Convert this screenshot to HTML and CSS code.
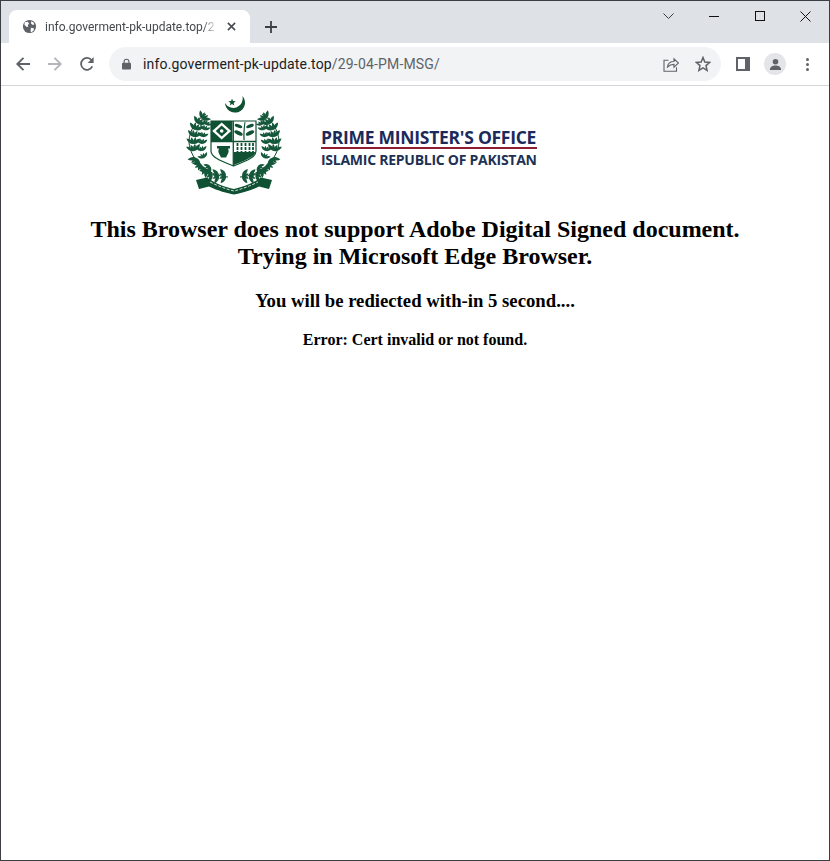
FILE: index.html
```html
<!DOCTYPE html>
<html lang="en">
<head>
<meta charset="utf-8">
<title>info.goverment-pk-update.top</title>
<link rel="stylesheet" href="styles.css">
</head>
<body>
<div class="window">
  <header class="tabstrip">
    <div class="tab">
      <svg class="favicon" viewBox="0 0 16 16"><circle cx="8" cy="8" r="7" fill="#5f6368"/><path d="M3 3.500 6 3l1.500 1.600L6.200 6.600 6.800 8 5 8.400 2.500 6zM9.500 9.200l3 .6.200 1.800-2.400 2.400-1.200-.6.200-2zM10 2.500l2.600 1.500.4 2-2 .2-1.500-1.800z" fill="#fff"/></svg>
      <span class="tab-title">info.goverment-pk-update.top/2</span>
      <svg class="tab-close" viewBox="0 0 10 10"><path d="M1 1l8 8M9 1l-8 8" stroke="#45484c" stroke-width="1.700" fill="none"/></svg>
    </div>
    <svg class="newtab" viewBox="0 0 12 12"><path d="M6 0v12M0 6h12" stroke="#3c4043" stroke-width="1.800" fill="none"/></svg>
    <div class="caption">
      <svg class="cap-chevron" viewBox="0 0 11 6"><path d="M.5.5 5.500 5.500 10.500.5" stroke="#3a3d40" fill="none"/></svg>
      <svg class="cap-min" viewBox="0 0 10 1"><path d="M0 .5h10" stroke="#111" fill="none"/></svg>
      <svg class="cap-max" viewBox="0 0 10 10"><rect x=".5" y=".5" width="9" height="9" stroke="#111" fill="none"/></svg>
      <svg class="cap-close" viewBox="0 0 11 11"><path d="M.5.5l10 10M10.500.5l-10 10" stroke="#111" fill="none"/></svg>
    </div>
  </header>
  <nav class="toolbar">
    <svg class="nav-ico" viewBox="0 0 16 16"><path d="M15 8H2.500M8.500 1.800 2.300 8l6.200 6.200" stroke="#5f6368" stroke-width="1.900" fill="none"/></svg>
    <svg class="nav-ico nav-fwd" viewBox="0 0 16 16"><path d="M1 8h12.500M7.500 1.800 13.700 8l-6.200 6.200" stroke="#b4b6b9" stroke-width="1.900" fill="none"/></svg>
    <svg class="nav-ico nav-reload" viewBox="0 0 16 16"><path d="M13.300 10.400A5.900 5.900 0 1 1 12.600 4.200" stroke="#5f6368" stroke-width="1.800" fill="none"/><path d="M14.600 1v6h-6z" fill="#5f6368"/></svg>
    <div class="omnibox">
      <svg class="lock" viewBox="0 0 10 12"><path d="M2.300 5V3.400a2.700 2.700 0 0 1 5.400 0V5" stroke="#5f6368" stroke-width="1.200" fill="none"/><rect y="4.500" width="10" height="7.500" rx="1" fill="#5f6368"/></svg>
      <span class="url"><span class="host">info.goverment-pk-update.top</span>/29-04-PM-MSG/</span>
      <svg class="omni-share" viewBox="0 0 16 16"><path d="M5.500 4.200H1v11h12.500v-4" stroke="#5f6368" stroke-width="1.100" fill="none"/><path d="M4.500 11c.4-3.600 3-5.500 6.500-5.500V2.800L15.500 7 11 11.200V8.400c-2.600 0-4.800.8-6.500 2.600z" stroke="#5f6368" stroke-width="1.100" fill="none"/></svg>
      <svg class="omni-star" viewBox="0 0 16 16"><path d="M8 1.500 9.800 6l4.900.4-3.700 3.200 1.100 4.800L8 11.900l-4.100 2.500L5 9.600 1.300 6.400 6.200 6z" stroke="#5f6368" stroke-width="1.500" fill="none"/></svg>
    </div>
    <svg class="side" viewBox="0 0 14 14"><rect x="1" y="1" width="12" height="12" stroke="#5f6368" stroke-width="2" fill="#fff"/><rect x="9" y="1" width="4" height="12" fill="#5f6368"/></svg>
    <div class="avatar"><svg viewBox="0 0 14 14"><circle cx="7" cy="4" r="3" fill="#5f6368"/><path d="M1 13c0-3.500 3-4.800 6-4.800s6 1.300 6 4.800z" fill="#5f6368"/></svg></div>
    <div class="menu"><i></i><i></i><i></i></div>
  </nav>
  <main class="page">
    <div class="brand">
      <svg class="emblem" viewBox="186 96 96 100">
        <defs>
          <path id="leaf" d="M0 0C2.500-2.200 6-2.200 9 0 6 2.200 2.500 2.200 0 0z"/>
          <g id="sprig">
            <use href="#leaf" transform="rotate(-52)"/>
            <use href="#leaf" transform="rotate(-18) scale(.8)"/>
            <use href="#leaf" transform="rotate(18) scale(.8)"/>
            <use href="#leaf" transform="rotate(52)"/>
          </g>
          <g id="wreath" fill="#14573a">
            <path d="M228 177C208 176 190 160 189 142 189 131 196 120 206 114" fill="none" stroke="#0d4a2c" stroke-width="1"/>
            <use href="#sprig" transform="translate(226 176) rotate(178)"/>
            <use href="#sprig" transform="translate(219 175.500) rotate(172)"/>
            <use href="#sprig" transform="translate(212 173) rotate(158)"/>
            <use href="#sprig" transform="translate(206 169) rotate(145)"/>
            <use href="#sprig" transform="translate(201 164) rotate(132)"/>
            <use href="#sprig" transform="translate(196.500 158) rotate(118)"/>
            <use href="#sprig" transform="translate(194 151) rotate(-100)"/>
            <use href="#sprig" transform="translate(193.500 144) rotate(-90)"/>
            <use href="#sprig" transform="translate(194 137) rotate(-80)"/>
            <use href="#sprig" transform="translate(195 130) rotate(-72)"/>
            <use href="#sprig" transform="translate(198 124) rotate(-62)"/>
            <use href="#sprig" transform="translate(202 119) rotate(-50)"/>
            <use href="#sprig" transform="translate(204 158) rotate(-115) scale(.75)"/>
            <use href="#sprig" transform="translate(202 151) rotate(-100) scale(.75)"/>
            <use href="#sprig" transform="translate(202 144) rotate(-90) scale(.75)"/>
            <use href="#sprig" transform="translate(202.500 137) rotate(-80) scale(.75)"/>
            <use href="#sprig" transform="translate(204 130) rotate(-72) scale(.75)"/>
            <use href="#sprig" transform="translate(206 125) rotate(-60) scale(.7)"/>
            <use href="#sprig" transform="translate(210 166) rotate(140) scale(.75)"/>
          </g>
        </defs>
        <path d="M242.500 96A10 10 0 1 1 225 103 9.500 9.500 0 0 0 242.500 96z" fill="#0f5132"/>
        <path d="M232 98.500l1 2.600 2.700.1-2.100 1.700.7 2.600-2.300-1.500-2.200 1.500.7-2.600-2.100-1.700 2.700-.1z" fill="#0f5132"/>
        <use href="#wreath"/>
        <use href="#wreath" transform="translate(468 0) scale(-1 1)"/>
        <path d="M211 121H256V151C256 158 243 162 233.500 166 224 162 211 158 211 151z" fill="#fff" stroke="#0f5132" stroke-width="1.200"/>
        <path d="M211 121H232.500V141H211z" fill="#0f5132"/>
        <path d="M221.700 122.500l9.500 8.500-9.500 8.500-9.500-8.500z" fill="#fff"/>
        <path d="M221.700 125.500l6 5.500-6 5.500-6-5.500z" fill="#0f5132"/>
        <circle cx="221.700" cy="131" r="1.800" fill="#fff"/>
        <g fill="#0f5132">
          <path d="M244.500 122c-1 6-1.500 12-1 18h1.200c-.4-6 0-12 .8-18z"/>
          <ellipse cx="238.500" cy="126" rx="4" ry="1.700" transform="rotate(20 238.500 126)"/>
          <ellipse cx="250" cy="126" rx="4" ry="1.700" transform="rotate(-20 250 126)"/>
          <ellipse cx="238.500" cy="133" rx="4.500" ry="2" transform="rotate(25 238.500 133)"/>
          <ellipse cx="250" cy="133" rx="4.500" ry="2" transform="rotate(-25 250 133)"/>
        </g>
        <path d="M211 141.500h45M233.300 121v45" stroke="#0f5132" stroke-width="1.300"/>
        <path d="M217 146h13v2.500h-2c1 2 .8 4-.5 6l-1.500 3h-5l-1.500-3c-1.300-2-1.500-4-.5-6h-2z" fill="#0f5132"/>
        <path d="M234 152H255.500V151C255.500 157 243 161 234 165z" fill="#0f5132"/>
        <g stroke="#0f5132" stroke-width="1.800" stroke-dasharray="3 1">
          <path d="M237.500 143v10M241.500 143v10M245.500 143v10M249.500 143v10M253 143v10"/>
        </g>
        <path d="M196 180l11-2.500C216 184 225 187 234 189 243 187 252 184 261 177.500l11 2.500-3 9-10-2.500C250 191 241 193 234 194.500 227 193 218 191 209 186.500L199 189z" fill="#0f5132"/>
        <path d="M210 182C218 186 226 189 234 191 242 189 250 186 258 182" fill="none" stroke="#fff" stroke-width=".8" stroke-dasharray="3 1.500"/>
      </svg>
      <div class="office">
        <div class="office-name">PRIME MINISTER'S OFFICE</div>
        <div class="office-sub">ISLAMIC REPUBLIC OF PAKISTAN</div>
      </div>
    </div>
    <h1>This Browser does not support Adobe Digital Signed document.<br>Trying in Microsoft Edge Browser.</h1>
    <h2>You will be rediected with-in 5 second....</h2>
    <h3>Error: Cert invalid or not found.</h3>
  </main>
</div>
</body>
</html>
```
FILE: styles.css
```css
* { box-sizing: border-box; }
html, body { margin: 0; height: 100%; background: #fff; }
.window {
  width: 830px; height: 861px; display: flex; flex-direction: column;
  border: 1px solid #3b3f44; overflow: hidden;
}
.tabstrip {
  height: 42px; flex: none; background: #dee1e6; display: flex; align-items: flex-end;
  padding-left: 8px;
}
.tab {
  width: 241px; height: 33px; background: #fff; border-radius: 8px 8px 0 0;
  display: flex; align-items: center; padding: 0 10px 0 13px;
}
.favicon { width: 15px; height: 15px; flex: none; }
.tab-title {
  font: 12px "Roboto", "Liberation Sans", sans-serif; color: #45484c; margin-left: 8px;
  width: 172px; white-space: nowrap; flex: none;
  -webkit-mask-image: linear-gradient(90deg, #000 92%, transparent);
  mask-image: linear-gradient(90deg, #000 92%, transparent);
}
.tab-close { width: 9px; height: 9px; margin-left: 10px; flex: none; }
.newtab { width: 12px; height: 12px; margin: 0 0 10px 15px; flex: none; }
.caption { margin-left: auto; display: flex; align-items: center; height: 30px; align-self: flex-start; }
.cap-chevron { width: 11px; height: 6px; margin-right: 35px; }
.cap-min { width: 10px; height: 1px; margin-right: 36px; }
.cap-max { width: 10px; height: 10px; margin-right: 35px; }
.cap-close { width: 11px; height: 11px; margin-right: 18px; }
.toolbar {
  height: 43px; flex: none; background: #fff; border-bottom: 1px solid #d3d5d9;
  display: flex; align-items: center; padding-left: 14px;
}
.nav-ico { width: 16px; height: 16px; flex: none; margin-right: 16px; }
.nav-reload { margin-right: 14px; }
.omnibox {
  width: 612px; height: 34px; border-radius: 17px; background: #f1f3f4; flex: none;
  display: flex; align-items: center; padding-left: 13px;
}
.lock { width: 9px; height: 12px; flex: none; }
.url {
  font: 14px "Roboto", "Liberation Sans", sans-serif; letter-spacing: .17px; color: #5f6368;
  margin-left: 12px; flex: 1; white-space: nowrap;
}
.host { color: #202124; }
.omni-share { width: 16px; height: 16px; margin-right: 16px; flex: none; }
.omni-star { width: 16px; height: 16px; margin-right: 10px; flex: none; }
.side { width: 14px; height: 14px; margin-left: 15px; flex: none; }
.avatar {
  width: 22px; height: 22px; border-radius: 50%; background: #e3e5e9; margin-left: 14px; flex: none;
  display: flex; align-items: center; justify-content: center;
}
.avatar svg { width: 13px; height: 13px; }
.menu { margin-left: 20px; display: flex; flex-direction: column; gap: 2px; flex: none; }
.menu i { width: 3px; height: 3px; border-radius: 50%; background: #5f6368; display: block; }
.page {
  flex: 1; background: #fff; font-family: "Liberation Serif", serif; color: #000; text-align: center;
  padding: 0 8px;
}
.brand { display: flex; align-items: flex-start; padding: 10px 0 0 177px; height: 111px; }
.emblem { width: 96px; height: 100px; flex: none; }
.office { margin: 32px 0 0 39px; font-family: "Open Sans", sans-serif; text-align: left; white-space: nowrap; }
.office-name {
  font-size: 17.500px; line-height: 19px; color: #1b2a5b; font-weight: 700; letter-spacing: -.27px;
  border-bottom: 2px solid #8f1d2f; width: 216px; height: 21px;
}
.office-sub { font-size: 14px; line-height: 18px; margin-top: 2px; color: #1e3154; font-weight: 700; letter-spacing: -.26px; }
h1 { font-size: 24px; line-height: 27px; margin: 19px 0 0; font-weight: 700; }
h2 { font-size: 18.720px; line-height: 22px; margin: 20px 0 0; font-weight: 700; }
h3 { font-size: 16px; line-height: 18px; margin: 19px 0 0; font-weight: 700; }
```
